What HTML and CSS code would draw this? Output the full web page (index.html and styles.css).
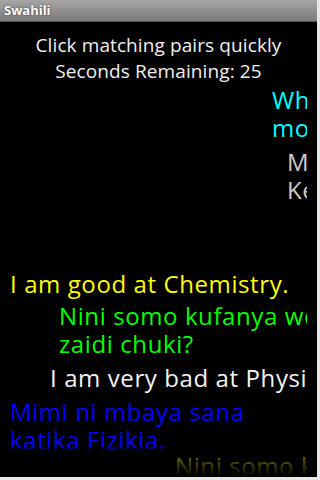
FILE: index.html
```html
<!DOCTYPE html>
<html lang="sw">
<head>
    <meta charset="UTF-8">
    <meta name="viewport" content="width=device-width, initial-scale=1.0">
    <title>Swahili</title>
    <link rel="stylesheet" href="styles.css">
</head>
<body>
    <div class="screen">
        <div class="title-bar">Swahili</div>
        <div class="game">
            <div class="header">
                <p>Click matching pairs quickly</p>
                <p>Seconds Remaining: 25</p>
            </div>
            <div class="board">
                <div class="card cyan c1">What subject do you like most?</div>
                <div class="card gray c2">Mimi ni nzuri katika Kemia.</div>
                <div class="card yellow c3">I am good at Chemistry.</div>
                <div class="card green c4">Nini somo kufanya wewe zaidi chuki?</div>
                <div class="card white c5">I am very bad at Physics.</div>
                <div class="card blue c6">Mimi ni mbaya sana katika Fizikia.</div>
                <div class="card yellow c7">Nini somo kufanya wewe zaidi kama?</div>
            </div>
        </div>
    </div>
</body>
</html>
```

FILE: styles.css
```css
body {
    margin: 0;
    padding: 0;
    background-color: #e8e8e8;
    font-family: "Open Sans", "Noto Sans", sans-serif;
}

.screen {
    width: 317px;
    height: 477px;
    background: #000;
    display: flex;
    flex-direction: column;
    overflow: hidden;
}

.title-bar {
    height: 21px;
    line-height: 21px;
    padding-left: 4px;
    background: linear-gradient(#a6a6a6, #7a7a7a);
    border-bottom: 1px solid #555;
    color: #fff;
    font-size: 13px;
    font-weight: bold;
    text-shadow: 0 0 2px #333;
}

.game {
    flex: 1;
    position: relative;
    overflow: hidden;
}

/* fading edge at the bottom of the scroll view */
.game::after {
    content: "";
    position: absolute;
    left: 0;
    right: 0;
    bottom: 0;
    height: 30px;
    background: linear-gradient(rgba(0, 0, 0, 0.4), #000);
}

.header {
    margin-top: 10px;
    text-align: center;
    color: #f0f0f0;
    font-size: 19px;
    letter-spacing: 0.1px;
    line-height: 26px;
}

.header p {
    margin: 0;
}

.board {
    width: 307px;
    overflow: hidden;
}

.card {
    width: 296px;
    margin-top: 6px;
    font-size: 24px;
    letter-spacing: 0.6px;
    line-height: 28px;
}

.cyan { color: #00ffff; }
.gray { color: #cccccc; }
.yellow { color: #ffff00; }
.green { color: #00ff00; }
.white { color: #f4f4f4; }
.blue { color: #0000ff; }

.c1 { margin-left: 272px; margin-top: 2px; }
.c2 { margin-left: 287px; }
.c3 { margin-left: 10px; margin-top: 66px; }
.c4 { margin-left: 59px; margin-top: 4px; }
.c5 { margin-left: 50px; }
.c6 { margin-left: 10px; }
.c7 { margin-left: 175px; margin-top: -2px; }
```
